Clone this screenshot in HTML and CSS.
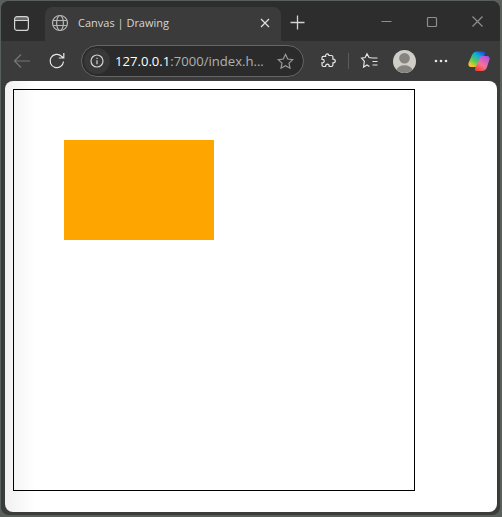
FILE: index.html
```html
<!DOCTYPE html>
<html lang="en">
<head>
<meta charset="utf-8">
<title>Canvas | Drawing</title>
<link rel="stylesheet" href="styles.css">
</head>
<body>
<div class="window">
  <header class="tabstrip">
    <div class="tab-actions">
      <svg class="icon" width="15" height="15" viewBox="0 0 15 15"><path class="band" d="M1 4.500V3a2 2 0 0 1 2-2h9a2 2 0 0 1 2 2v1.500z"/><rect x="0.600" y="0.600" width="13.800" height="13.800" rx="2.500"/><path d="M1 4.500h13"/></svg>
    </div>
    <div class="tab">
      <svg class="icon globe" width="18" height="18" viewBox="0 0 18 18"><circle cx="9" cy="9" r="7.500"/><ellipse cx="9" cy="9" rx="3.400" ry="7.500"/><path d="M2 6.500h14M2 11.500h14"/></svg>
      <span class="tab-title">Canvas | Drawing</span>
      <svg class="icon tab-close" width="10" height="10" viewBox="0 0 10 10"><path d="M1 1l8 8M9 1l-8 8"/></svg>
    </div>
    <svg class="icon new-tab" width="15" height="15" viewBox="0 0 15 15"><path d="M7.500 0.500v14M0.500 7.500h14"/></svg>
    <div class="window-controls">
      <svg class="icon dim" width="11" height="11" viewBox="0 0 11 11"><path d="M0.500 5.500h10"/></svg>
      <svg class="icon dim" width="10" height="10" viewBox="0 0 10 10"><rect x="0.500" y="0.500" width="9" height="9" rx="1"/></svg>
      <svg class="icon dim" width="11" height="11" viewBox="0 0 11 11"><path d="M0.500 0.500l10 10M10.500 0.500l-10 10"/></svg>
    </div>
  </header>
  <nav class="toolbar">
    <svg class="icon back" width="18" height="16" viewBox="0 0 18 16"><path d="M17 8H1.500M8 1.500L1.500 8 8 14.500"/></svg>
    <svg class="icon reload" width="18" height="18" viewBox="0 0 18 18"><path d="M15.500 9.500a6.700 6.700 0 1 1-2-5.300l2 1.800M15.800 1v5h-5"/></svg>
    <div class="address">
      <span class="info"><svg class="icon" width="14" height="14" viewBox="0 0 14 14"><circle cx="7" cy="7" r="6"/><path d="M7 6.200v4M7 3.700v1.200"/></svg></span>
      <span class="url"><span class="host">127.0.0.1</span>:7000/index.h...</span>
      <svg class="icon star" width="17" height="17" viewBox="0 0 17 17"><path d="M8.500 1.300l2.200 4.700 5 .6-3.700 3.500 1 5.100-4.500-2.500-4.500 2.500 1-5.100L1.300 6.600l5-.6z"/></svg>
    </div>
    <svg class="icon puzzle" width="14" height="16" viewBox="1.600 0 14 16"><path d="M6 1.200c1-.6 2.400 0 2.500 1.300h2.600c.8 0 1.400.6 1.400 1.400v2.300c1.700-.2 2.400 1 2.400 1.800s-.7 2-2.400 1.800v2.300c0 .8-.6 1.400-1.400 1.400H8.800c.2-1.700-.9-2.300-1.800-2.300s-2 .6-1.800 2.300H3c-.8 0-1.400-.6-1.400-1.400v-2.300c1.500.2 2.200-.8 2.200-1.800S3.100 6.200 1.600 6.400V4.800c0-.8.600-1.400 1.400-1.400h2.200C5 2.500 5.300 1.600 6 1.200z"/></svg>
    <span class="divider"></span>
    <svg class="icon fav" width="17" height="16" viewBox="0 0 17 16"><path d="M10.800 4.800L8 4.500 6 .8 4.200 4.500.6 5.200l2.700 3-.7 5.800L6 12l2.400 1.500M11 5h5.500M11.500 8.500h5M11.500 12h5"/></svg>
    <svg class="avatar" width="23" height="23" viewBox="0 0 23 23"><circle cx="11.500" cy="11.500" r="11.500" fill="#cfcdc8"/><circle cx="11.500" cy="8.300" r="5.300" fill="#87837f"/><path d="M3.600 19.800c1-3 4.200-4.600 7.900-4.600s6.900 1.600 7.900 4.600a11.500 11.500 0 0 1-15.800 0z" fill="#87837f"/></svg>
    <svg class="dots" width="14" height="4" viewBox="0 0 14 4"><circle cx="2" cy="2" r="1.300"/><circle cx="7" cy="2" r="1.300"/><circle cx="12" cy="2" r="1.300"/></svg>
    <svg class="copilot" width="22" height="21" viewBox="0 0 22 21">
      <defs>
        <linearGradient id="cp-left" x1="0.150" y1="0.900" x2="0.800" y2="0"><stop offset="0" stop-color="#f7c531"/><stop offset=".35" stop-color="#4fcb57"/><stop offset=".7" stop-color="#14a9df"/><stop offset="1" stop-color="#1556d8"/></linearGradient>
        <linearGradient id="cp-right" x1="0.250" y1="1" x2="0.850" y2="0"><stop offset="0" stop-color="#f4442c"/><stop offset=".4" stop-color="#f7729a"/><stop offset="1" stop-color="#a552e6"/></linearGradient>
      </defs>
      <path d="M9 .5h5.500c2 0 3 1 2.500 2.500L11 14c-.7 1.600-2 2-3.500 2H3C1 16 0 14.500 .5 12L4 4C5 1.500 7 .5 9 .5z" fill="url(#cp-left)"/>
      <path d="M14 5h5c2 0 3 1.600 2.500 3.500L19 16c-.7 2.500-2.500 4-5 4H9c-1.800 0-2.500-1.300-2-2.500L11 9c.7-2 1.500-4 3-4z" fill="url(#cp-right)"/>
    </svg>
  </nav>
  <main class="content">
    <div class="canvas">
      <div class="shape"></div>
    </div>
  </main>
</div>
</body>
</html>
```
FILE: styles.css
```css
* { box-sizing: border-box; }
html, body { margin: 0; height: 100%; }
body {
  width: 502px;
  height: 517px;
  padding: 1px 2px 2px 1px;
  background: #59605c;
  font-family: "Open Sans", "Noto Sans", sans-serif;
  overflow: hidden;
}
.window {
  height: 514px;
  background: #3b3b3b;
  border-radius: 8px;
  overflow: hidden;
  display: flex;
  flex-direction: column;
}
.icon { fill: none; stroke: #d4d4d4; stroke-width: 1.2; flex: none; display: block; overflow: visible; }
.icon.dim { stroke: #8f8f8f; }
.band { fill: #6a6a6a; stroke: none; }
.tabstrip {
  height: 40px;
  flex: none;
  display: flex;
  align-items: flex-end;
  background: #2d2d2d;
}
.tab-actions {
  width: 44px;
  height: 34px;
  padding: 9px 0 0 13px;
}
.tab {
  width: 236px;
  height: 34px;
  background: #3b3b3b;
  border-radius: 8px 8px 0 0;
  display: flex;
  align-items: center;
  padding: 0 10px 2px 6px;
}
.globe { stroke: #b5b5b5; }
.tab-title {
  margin: 0 0 2px 9px;
  flex: 1;
  font-size: 11px;
  color: #d6d6d6;
  white-space: nowrap;
}
.tab-close { margin-right: 1px; stroke: #e0e0e0; }
.new-tab { margin: 0 0 11px 9px; stroke-width: 1.300; }
.window-controls {
  display: flex;
  align-items: center;
  gap: 35px;
  margin: 0 17px 14px auto;
}
.toolbar {
  height: 40px;
  flex: none;
  display: flex;
  align-items: center;
  padding: 0 0 0 12px;
}
.back { stroke: #777; }
.reload { margin-left: 17px; stroke: #e6e6e6; }
.address {
  width: 223px;
  height: 32px;
  margin-left: 15px;
  border: 1px solid #666;
  border-radius: 16px;
  background: #2b2b2b;
  display: flex;
  align-items: center;
  padding-right: 9px;
}
.info {
  width: 26px;
  height: 26px;
  margin-left: 2px;
  border-radius: 50%;
  background: #383838;
  display: flex;
  align-items: center;
  justify-content: center;
  flex: none;
}
.url {
  margin-left: 5px;
  flex: 1;
  font-size: 13.100px;
  color: #b0b0b0;
  white-space: nowrap;
  overflow: hidden;
}
.host { color: #fff; font-weight: 500; }
.star { stroke: #9a9a9a; }
.puzzle { margin-left: 18px; stroke: #e6e6e6; }
.divider { width: 1px; height: 16px; background: #5c5c5c; margin-left: 12px; flex: none; }
.fav { margin-left: 12px; stroke: #e6e6e6; }
.avatar { margin-left: 15px; flex: none; }
.dots { margin-left: 18px; fill: #e6e6e6; flex: none; }
.copilot { margin-left: 20px; flex: none; }
.content {
  flex: 1;
  margin: 0 3px 3px 4px;
  padding: 8px;
  border-radius: 8px;
  background: linear-gradient(90deg, #f1f1f1 0, #fff 30px);
}
.canvas {
  width: 402px;
  height: 402px;
  border: 1px solid #000;
  padding: 50px;
}
.shape { width: 150px; height: 100px; background: #ffa500; }
```
